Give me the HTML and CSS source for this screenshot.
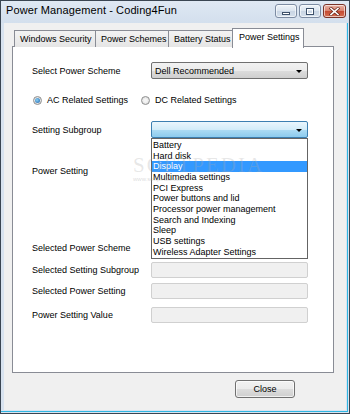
FILE: index.html
```html
<!DOCTYPE html>
<html>
<head>
<meta charset="utf-8">
<link rel="stylesheet" href="styles.css">
</head>
<body>
<div class="window">
  <div class="titlebar">
    <span class="title">Power Management - Coding4Fun</span>
    <div class="caption-btns">
      <div class="cbtn"><span class="min-glyph"></span></div>
      <div class="cbtn"><span class="max-glyph"></span></div>
      <div class="cbtn close"><svg width="11" height="9" viewBox="0 0 11 9"><path d="M2 1.5 L9 7.5 M9 1.5 L2 7.5" stroke="#6b2a1e" stroke-width="3" stroke-linecap="square"/><path d="M2 1.5 L9 7.5 M9 1.5 L2 7.5" stroke="#fff" stroke-width="1.6" stroke-linecap="square"/></svg></div>
    </div>
  </div>
  <div class="client">
    <div class="tabs">
      <div class="tab t1">Windows Security</div>
      <div class="tab t2">Power Schemes</div>
      <div class="tab t3">Battery Status</div>
      <div class="tab active">Power Settings</div>
    </div>
    <div class="panel">
      <div class="row r1">
        <span class="label">Select Power Scheme</span>
        <div class="combo"><span>Dell Recommended</span><span class="arrow"></span></div>
      </div>
      <div class="row r2">
        <label class="radio-item"><span class="radio checked"></span>AC Related Settings</label>
        <label class="radio-item dc"><span class="radio"></span>DC Related Settings</label>
      </div>
      <div class="row r3">
        <span class="label">Setting Subgroup</span>
        <div class="combo open"><span></span><span class="arrow"></span>
          <ul class="droplist">
            <li>Battery</li>
            <li>Hard disk</li>
            <li class="sel">Display</li>
            <li>Multimedia settings</li>
            <li>PCI Express</li>
            <li>Power buttons and lid</li>
            <li>Processor power management</li>
            <li>Search and Indexing</li>
            <li>Sleep</li>
            <li>USB settings</li>
            <li>Wireless Adapter Settings</li>
          </ul>
        </div>
      </div>
      <div class="row r4">
        <span class="label">Power Setting</span>
      </div>
      <div class="row r5">
        <span class="label">Selected Power Scheme</span>
        <div class="textbox"></div>
      </div>
      <div class="row r6">
        <span class="label">Selected Setting Subgroup</span>
        <div class="textbox"></div>
      </div>
      <div class="row r7">
        <span class="label">Selected Power Setting</span>
        <div class="textbox"></div>
      </div>
      <div class="row r8">
        <span class="label">Power Setting Value</span>
        <div class="textbox"></div>
      </div>
      <div class="watermark"><span class="wm-big">SOFTPEDIA</span><span class="wm-small">www.softpedia.com</span></div>
    </div>
    <div class="footer">
      <button class="btn">Close</button>
    </div>
  </div>
</div>
</body>
</html>
```

FILE: styles.css
```css
* { box-sizing: border-box; }
html, body { margin: 0; padding: 0; }
body {
  width: 350px;
  height: 414px;
  overflow: hidden;
  font-family: "Liberation Sans", Arial, sans-serif;
  font-size: 9px;
  color: #000;
  background: #fff;
}
.window {
  width: 350px;
  height: 414px;
  border: 1px solid #3a4552;
  background: #d8e3f0;
  display: flex;
  flex-direction: column;
  box-shadow: inset -1px -1px 0 #d8e3f0, inset -2px -2px 0 #2fb7e3;
}
.titlebar {
  height: 22px;
  display: flex;
  align-items: flex-start;
  justify-content: space-between;
  background: linear-gradient(#dfe8f3, #d3dfed);
}
.title {
  font-size: 11px;
  margin: 3px 0 0 5px;
  color: #000;
  letter-spacing: 0.1px;
}
.caption-btns {
  display: flex;
  gap: 2px;
  margin: 3px 3px 0 0;
}
.cbtn {
  width: 22px;
  height: 14px;
  border: 1px solid #7d8ca3;
  border-radius: 3px;
  background: linear-gradient(#eef3f9 0%, #dbe4ef 50%, #c9d5e4 51%, #d5e0ec 100%);
  display: flex;
  align-items: center;
  justify-content: center;
  box-shadow: inset 0 0 0 1px rgba(255,255,255,0.6);
}
.cbtn.close {
  width: 23px;
  border-color: #7a3328;
  background: linear-gradient(#e8b1a4 0%, #d9826e 50%, #c44a31 51%, #d66d50 100%);
}
.min-glyph {
  width: 8px;
  height: 3px;
  margin-top: 4px;
  background: #fff;
  border: 1px solid #3d506a;
}
.max-glyph {
  width: 8px;
  height: 7px;
  border: 1px solid #3d506a;
  border-top-width: 2px;
  background: transparent;
  outline: 1px solid #fff;
  outline-offset: -2px;
}
.client {
  flex: 1;
  margin: 0 3px 3px 3px;
  background: #f0f0f0;
  padding: 4px 0 0 8px;
  display: flex;
  flex-direction: column;
}
.tabs {
  display: flex;
  align-items: flex-end;
  height: 20px;
  padding-left: 2px;
  position: relative;
  z-index: 2;
}
.tab {
  height: 17px;
  border: 1px solid #898c95;
  border-bottom: none;
  border-right: none;
  background: linear-gradient(#f3f3f3, #e5e5e5);
  padding: 3px 0 0 5px;
  white-space: nowrap;
  font-size: 9px;
}
.t1 { width: 81px; }
.t2 { width: 73px; }
.t3 { width: 64px; }
.tab.active {
  height: 20px;
  width: 72px;
  background: #fff;
  border-right: 1px solid #898c95;
  padding: 3px 0 0 6px;
  margin-bottom: -1px;
}
.panel {
  position: relative;
  width: 322px;
  height: 327px;
  background: #fff;
  border: 1px solid #898c95;
  padding: 15px 0 0 19px;
  margin-top: -1px;
}
.row {
  display: flex;
  align-items: center;
}
.label {
  width: 119px;
  flex: none;
  white-space: nowrap;
}
.r1 { height: 17px; }
.r2 { height: 14px; margin-top: 14px; }
.r3 { height: 17px; margin-top: 14px; }
.r4 { height: 22px; margin-top: 22px; }
.r5 { height: 16px; margin-top: 58px; }
.r6 { height: 16px; margin-top: 6px; }
.r7 { height: 16px; margin-top: 5px; }
.r8 { height: 16px; margin-top: 8px; }
.combo {
  position: relative;
  width: 157px;
  height: 17px;
  border: 1px solid #707070;
  border-radius: 2px;
  background: linear-gradient(#f2f2f2 0%, #ebebeb 50%, #dddddd 51%, #cfcfcf 100%);
  display: flex;
  align-items: center;
  justify-content: space-between;
  padding: 0 5px 0 3px;
}
.combo.open {
  border-color: #3c7fb1;
  background: linear-gradient(#eaf6fd 0%, #d2ecf9 50%, #aedcf4 51%, #8ccbee 100%);
}
.arrow {
  width: 0;
  height: 0;
  border-left: 3px solid transparent;
  border-right: 3px solid transparent;
  border-top: 3px solid #000;
  margin-top: 1px;
}
.droplist {
  position: absolute;
  left: -1px;
  top: 16px;
  width: 157px;
  height: 121px;
  margin: 0;
  padding: 1px 0 0 0;
  list-style: none;
  background: #fff;
  border: 1px solid #646464;
  z-index: 5;
}
.droplist li {
  height: 10.66px;
  line-height: 10.66px;
  padding-left: 1px;
  white-space: nowrap;
}
.droplist li.sel {
  background: #3399ff;
  color: #fff;
}
.radio-item {
  display: flex;
  align-items: center;
  white-space: nowrap;
}
.radio-item.dc { margin-left: 12px; }
.radio {
  width: 9px;
  height: 9px;
  border-radius: 50%;
  border: 1px solid #8e8f8f;
  background: radial-gradient(circle, #f4f4f4 30%, #d3d3d3 100%);
  margin: 0 5px 0 1px;
  display: flex;
  align-items: center;
  justify-content: center;
}
.radio.checked::after {
  content: "";
  width: 5px;
  height: 5px;
  border-radius: 50%;
  background: radial-gradient(circle at 40% 40%, #8ad1f5, #1a5ea8);
}
.textbox {
  width: 157px;
  height: 16px;
  border: 1px solid #d0d0d0;
  border-radius: 2px;
  background: #f0f0f0;
}
.watermark {
  position: absolute;
  left: 120px;
  top: 106px;
  display: flex;
  flex-direction: column;
  pointer-events: none;
  z-index: 6;
}
.wm-big {
  font-family: "Liberation Serif", serif;
  font-size: 21px;
  letter-spacing: 2px;
  color: rgba(170,170,170,0.28);
}
.wm-small {
  font-size: 6px;
  color: rgba(150,150,150,0.35);
  margin-top: -2px;
}
.footer {
  display: flex;
  justify-content: flex-end;
  padding: 7px 51px 0 0;
}
.btn {
  width: 60px;
  height: 18px;
  border: 1px solid #707070;
  border-radius: 3px;
  background: linear-gradient(#f2f2f2 0%, #ebebeb 50%, #dddddd 51%, #cfcfcf 100%);
  font-family: "Liberation Sans", Arial, sans-serif;
  font-size: 9px;
  color: #000;
  padding: 0;
  box-shadow: inset 0 0 0 1px rgba(255,255,255,0.7);
}
```
